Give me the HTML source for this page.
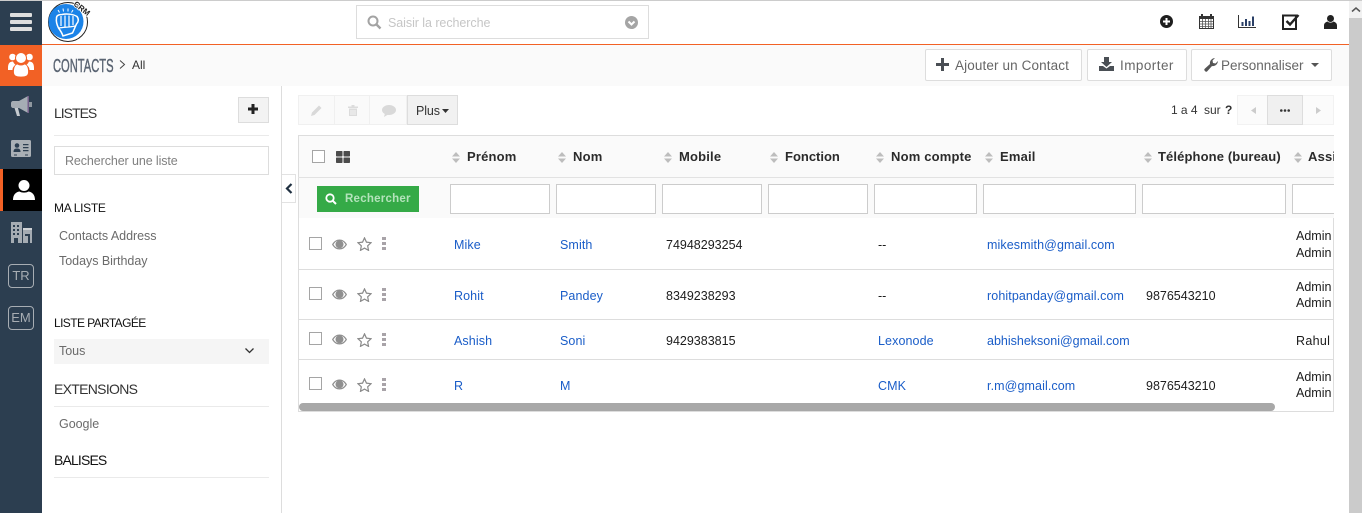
<!DOCTYPE html>
<html lang="fr"><head><meta charset="utf-8"><title>Contacts</title>
<style>
html,body{margin:0;padding:0;width:1362px;height:513px;overflow:hidden;background:#fff}
body{position:relative;font-family:"Liberation Sans","DejaVu Sans",sans-serif;font-size:12.5px;color:#333}
.b{position:absolute;box-sizing:border-box}
.t{position:absolute;white-space:nowrap;line-height:20px;height:20px;letter-spacing:.1px}
.l{color:#1a5dc8;margin-top:1px}
.g{color:#6b6b6b;letter-spacing:-.03px}
.h{font-weight:bold;font-size:13px;color:#2b2b2b;letter-spacing:.18px}
.s{font-size:14px;color:#333}
.m{font-size:12.5px;color:#1c1c1c;letter-spacing:0;margin-top:1px}
.btn{position:absolute;box-sizing:border-box;background:#fff;border:1px solid #ddd;border-radius:2px;top:49px;height:32px}
.inp{position:absolute;box-sizing:border-box;background:#fff;border:1px solid #ccc;top:184px;height:30px}
.cb{position:absolute;box-sizing:border-box;width:13px;height:13px;border:1px solid #a5a5a5;background:#fff;left:309px}
svg{position:absolute;overflow:visible}
</style></head><body>
<svg width="0" height="0" style="position:absolute"><defs>
<symbol id="sort" viewBox="0 0 8 11"><path d="M4 0L8 4.500H0zM0 6.500H8L4 11z" fill="#bdbdbd"/></symbol>
<symbol id="eye" viewBox="0 0 15 11"><path d="M0 5.500C2 2 4.600 .5 7.500 .5S13 2 15 5.500C13 9 10.400 10.500 7.500 10.500S2 9 0 5.500z" fill="#8f8f8f"/><path d="M1.500 5.500C3 3.200 4.500 2.200 5.500 1.900A4 4 0 1 0 9.500 1.900C10.500 2.200 12 3.200 13.500 5.500C12 7.900 10 9.300 7.500 9.300S3 7.900 1.500 5.500z" fill="#fff"/><circle cx="7.500" cy="5" r="3.300" fill="#8f8f8f"/></symbol>
<symbol id="star" viewBox="0 0 16 15"><path d="M8 1L10.100 5.500 15 6.100 11.400 9.500 12.300 14.300 8 11.900 3.700 14.300 4.600 9.500 1 6.100 5.900 5.500z" fill="none" stroke="#8a8a8a" stroke-width="1.300"/></symbol>
<symbol id="dots" viewBox="0 0 4 13"><path d="M0 0H4V3H0zM0 5H4V8H0zM0 10H4V13H0z" fill="#a8a3a8"/></symbol>
</defs></svg>

<!-- top -->
<div class="b" style="left:0;top:0;width:1362px;height:1px;background:#ccc"></div>
<div class="b" style="left:42px;top:44px;width:1307px;height:1px;background:#f26125"></div>
<div class="b" style="left:42px;top:45px;width:1307px;height:41px;background:#fafafa"></div>

<!-- sidebar -->
<div class="b" style="left:0;top:1px;width:42px;height:512px;background:#2c3e50"></div>
<div class="b" style="left:10px;top:13px;width:22px;height:4px;background:#dedede;border-radius:1px"></div>
<div class="b" style="left:10px;top:20px;width:22px;height:4px;background:#dedede;border-radius:1px"></div>
<div class="b" style="left:10px;top:27px;width:22px;height:4px;background:#dedede;border-radius:1px"></div>
<div class="b" style="left:0;top:45px;width:42px;height:41px;background:#f26125"></div>
<svg style="left:8px;top:51px" width="26" height="26" viewBox="0 0 26 26" fill="#fff"><circle cx="4.500" cy="6" r="3.300"/><circle cx="21.500" cy="6" r="3.300"/><path d="M0 17C0 12 2 10.500 5 10.500C6 12.500 7 13.500 8 14C5.500 15 4.500 17 4.500 19H0zM26 17C26 12 24 10.500 21 10.500C20 12.500 19 13.500 18 14C20.500 15 21.500 17 21.500 19H26z"/><circle cx="13" cy="7" r="5.500" stroke="#f26125" stroke-width="1"/><path d="M5.500 21C5.500 16 7 13.500 9.500 13C11.500 14.500 14.500 14.500 16.500 13C19 13.500 20.500 16 20.500 21C20.500 25 18 26 13 26S5.500 25 5.500 21z" stroke="#f26125" stroke-width=".8"/></svg>
<svg style="left:11px;top:96px" width="21" height="21" viewBox="0 0 21 21"><path d="M0 7C0 6 1 5 2 5H8L17 0V17L8 12H2C1 12 0 11 0 10z" fill="#a6adb4"/><path d="M3.500 12H7L9 20H6z" fill="#c5cacf"/><rect x="16.500" y="0" width="1.500" height="17" fill="#75608a"/><rect x="18" y="6" width="3" height="5" fill="#8f979f"/></svg>
<svg style="left:11px;top:140px" width="20" height="17" viewBox="0 0 20 17"><rect width="20" height="17" rx="1.500" fill="#aab0b6"/><circle cx="6" cy="5.500" r="2.300" fill="#2c3e50"/><path d="M2.500 12C2.500 9 4 8.500 6 8.500S9.500 9 9.500 12z" fill="#2c3e50"/><path d="M12 4H17.500V5.300H12zM12 7H17.500V8.300H12zM12 10H17.500V11.300H12zM3 14.500H6V15.500H3zM14 14.500H17V15.500H14z" fill="#2c3e50"/></svg>
<div class="b" style="left:0;top:169px;width:42px;height:42px;background:#000"></div>
<div class="b" style="left:0;top:169px;width:3px;height:42px;background:#f26125"></div>
<svg style="left:13px;top:179px" width="22" height="22" viewBox="0 0 22 22" fill="#fff"><circle cx="11" cy="6.500" r="5.500"/><path d="M0 21C0 15.500 3 13 6.500 12.500C9 14 13 14 15.500 12.500C19 13 22 15.500 22 21z"/></svg>
<svg style="left:11px;top:222px" width="21" height="21" viewBox="0 0 21 21"><path d="M0 0H11V21H0z" fill="#a5acb3"/><path d="M2 3H4V5H2zM6 3H8V5H6zM2 7H4V9H2zM6 7H8V9H6zM2 11H4V13H2zM6 11H8V13H6zM3 16H7V21H3z" fill="#2c3e50"/><path d="M12 7H21V21H12z" fill="#a5acb3"/><path d="M12 6H21V8H12z" fill="#d0d3d6"/><path d="M14 12H19V21H17V14H14z" fill="#2c3e50"/></svg>
<div class="b" style="left:8px;top:264px;width:26px;height:24px;border:1px solid #a7adb3;border-radius:4px"></div>
<div class="t" style="left:8px;top:266px;width:26px;text-align:center;color:#a7adb3;font-size:13px;letter-spacing:0">TR</div>
<div class="b" style="left:8px;top:306px;width:26px;height:24px;border:1px solid #a7adb3;border-radius:4px"></div>
<div class="t" style="left:8px;top:308px;width:26px;text-align:center;color:#a7adb3;font-size:13px;letter-spacing:0">EM</div>

<!-- logo -->
<svg style="left:47px;top:1px" width="43" height="42" viewBox="0 0 43 42">
<circle cx="21" cy="21" r="19.500" fill="#fff" stroke="#222" stroke-width="1"/>
<circle cx="19" cy="20.500" r="17.500" fill="#1b83e8"/>
<path d="M9.500 17C9.500 14.500 12 13.500 15 13.500C19 12.500 26 13 30 15.500C32 18 31.500 21 29.500 23C28 26 27 29 25.500 32L16 35C15 32 13 29 11.500 27C10 24 9 20 9.500 17z" fill="#1b83e8" stroke="#fff" stroke-width="1.500"/>
<path d="M14 15V25M18 14.500V26M22 14.500V26M26 15V24M12 27C17 26 22 26.500 28 25" fill="none" stroke="#fff" stroke-width="1.200"/>
<path d="M11 9L12.500 11.500M16 7.500L16.500 10.500M21 7.500V10.500M26 9L24.500 11.500" stroke="#fff" stroke-width="1"/>
<text x="0" y="0" transform="translate(26 4) rotate(38)" font-family="Liberation Sans" font-size="8" font-weight="bold" fill="#222" stroke="#fff" stroke-width="1.500" paint-order="stroke">CRM</text>
</svg>

<!-- search -->
<div class="b" style="left:356px;top:5px;width:293px;height:34px;border:1px solid #ddd;background:#fff"></div>
<svg style="left:367px;top:15px" width="15" height="15" viewBox="0 0 15 15"><circle cx="6" cy="6" r="4.500" fill="none" stroke="#a3a3a3" stroke-width="2"/><path d="M9.500 9.500L13.500 13.500" stroke="#a3a3a3" stroke-width="2.400"/></svg>
<div class="t" style="left:388px;top:13px;color:#c6c6c6;font-size:12.500px;letter-spacing:-.06px">Saisir la recherche</div>
<svg style="left:625px;top:16px" width="13" height="13" viewBox="0 0 13 13"><circle cx="6.500" cy="6.500" r="6.500" fill="#a5a5a5"/><path d="M3.500 5.500L6.500 8.500 9.500 5.500" fill="none" stroke="#fff" stroke-width="2"/></svg>

<!-- top right icons -->
<svg style="left:1160px;top:15px" width="13" height="13" viewBox="0 0 13 13"><circle cx="6.500" cy="6.500" r="6.500" fill="#1e1e1e"/><path d="M6.500 3V10M3 6.500H10" stroke="#fff" stroke-width="2"/></svg>
<svg style="left:1199px;top:14px" width="15" height="15" viewBox="0 0 15 15"><rect x=".5" y="2.500" width="14" height="12" fill="#fff" stroke="#333"/><rect x=".5" y="2" width="14" height="3" fill="#333"/><path d="M3 0V3M12 0V3" stroke="#333" stroke-width="2"/><path d="M1 7.500H14M1 10H14M1 12.500H14M3.500 5V14M6.500 5V14M9.500 5V14M12 5V14" stroke="#555" stroke-width=".8"/></svg>
<svg style="left:1238px;top:15px" width="18" height="13" viewBox="0 0 18 13"><path d="M.5 0V12.500H18" fill="none" stroke="#333"/><path d="M3.500 7H5.500V11H3.500zM7 4H9V11H7zM10.500 6H12.500V11H10.500zM14 1.500H16V11H14z" fill="#2a3f66"/></svg>
<svg style="left:1282px;top:13px" width="18" height="18" viewBox="0 0 18 18"><path d="M1 2.500H14V16H1z" fill="none" stroke="#222" stroke-width="2"/><path d="M4.500 8L8 11.500 16.500 2" fill="none" stroke="#222" stroke-width="2.400"/></svg>
<svg style="left:1324px;top:15px" width="13" height="14" viewBox="0 0 13 14" fill="#222"><circle cx="6.500" cy="3.500" r="3.500"/><path d="M0 14V10.500C0 8 2 7 3.500 6.500C5 8 8 8 9.500 6.500C11 7 13 8 13 10.500V14z"/></svg>

<!-- scrollbar -->
<div class="b" style="left:1349px;top:1px;width:13px;height:512px;background:#cbcbcb"></div>
<div class="b" style="left:1349px;top:1px;width:13px;height:17px;background:#f1f1f1"></div>
<svg style="left:1352px;top:7px" width="8" height="5" viewBox="0 0 8 5"><path d="M0 4.500L4 1 8 4.500" fill="none" stroke="#555" stroke-width="1.500"/></svg>

<!-- header -->
<div class="t" style="left:53px;top:56px;font-size:18px;color:#5a6472;transform:scaleX(.62);transform-origin:0 50%;letter-spacing:0;-webkit-text-stroke:.45px #5a6472">CONTACTS</div>
<svg style="left:119px;top:60px" width="7" height="9" viewBox="0 0 7 9"><path d="M1 .5L5.500 4.500 1 8.500" fill="none" stroke="#444" stroke-width="1"/></svg>
<div class="t" style="left:132px;top:55px;font-size:12px;color:#333;letter-spacing:0">All</div>

<div class="btn" style="left:925px;width:157px"></div>
<svg style="left:936px;top:58px" width="13" height="13" viewBox="0 0 13 13"><path d="M5 0H8V5H13V8H8V13H5V8H0V5H5z" fill="#4a4f55"/></svg>
<div class="t" style="left:955px;top:56px;font-size:13.500px;color:#666;letter-spacing:.12px">Ajouter un Contact</div>
<div class="btn" style="left:1087px;width:100px"></div>
<svg style="left:1099px;top:57px" width="15" height="14" viewBox="0 0 15 14" fill="#4a4f55"><path d="M5 0H10V5H13L7.500 10 2 5H5z"/><path d="M0 9H4L7.500 11.500 11 9H15V14H0z"/></svg>
<div class="t" style="left:1120px;top:56px;font-size:13.500px;color:#666;letter-spacing:.45px">Importer</div>
<div class="btn" style="left:1191px;width:141px"></div>
<svg style="left:1204px;top:58px" width="14" height="14" viewBox="0 0 14 14"><path d="M1 13C0 12 0 11.500 1 10.500L6 6C5.500 3.500 7 .5 11 0L8.500 2.500 9 5 11.500 5.500 14 3C13.500 7 10.500 8.500 8 8L3.500 13C2.500 14 2 14 1 13z" fill="#555"/></svg>
<div class="t" style="left:1221px;top:56px;font-size:13.500px;color:#666;letter-spacing:0">Personnaliser</div>
<svg style="left:1311px;top:63px" width="8" height="4" viewBox="0 0 8 4"><path d="M0 0H8L4 4z" fill="#555"/></svg>

<!-- left panel -->
<div class="b" style="left:281px;top:86px;width:1px;height:427px;background:#ddd"></div>
<div class="t s" style="left:54px;top:103px;letter-spacing:-1px">LISTES</div>
<div class="b" style="left:238px;top:97px;width:31px;height:26px;background:#f3f3f3;border:1px solid #ddd"></div>
<svg style="left:248px;top:104px" width="10" height="10" viewBox="0 0 10 10"><path d="M3.500 0H6.500V3.500H10V6.500H6.500V10H3.500V6.500H0V3.500H3.500z" fill="#222"/></svg>
<div class="b" style="left:54px;top:135px;width:215px;height:1px;background:#eaeaea"></div>
<div class="b" style="left:54px;top:146px;width:215px;height:29px;border:1px solid #ddd"></div>
<div class="t g" style="left:65px;top:151px;font-size:12.500px;color:#808080;letter-spacing:-.1px">Rechercher une liste</div>
<div class="t" style="left:54px;top:198px;font-size:12px;color:#111;letter-spacing:-.3px">MA LISTE</div>
<div class="t g" style="left:59px;top:226px">Contacts Address</div>
<div class="t g" style="left:59px;top:251px">Todays Birthday</div>
<div class="t" style="left:54px;top:313px;font-size:12px;color:#111;letter-spacing:-.6px">LISTE PARTAGÉE</div>
<div class="b" style="left:54px;top:339px;width:215px;height:25px;background:#f5f5f5"></div>
<div class="t g" style="left:59px;top:341px">Tous</div>
<svg style="left:245px;top:348px" width="9" height="6" viewBox="0 0 9 6"><path d="M.5 .5L4.500 4.500 8.500 .5" fill="none" stroke="#333" stroke-width="1.300"/></svg>
<div class="t s" style="left:54px;top:379px;letter-spacing:-.7px">EXTENSIONS</div>
<div class="b" style="left:54px;top:406px;width:215px;height:1px;background:#eaeaea"></div>
<div class="t g" style="left:59px;top:414px">Google</div>
<div class="t s" style="left:54px;top:450px;color:#111;letter-spacing:-.85px">BALISES</div>
<div class="b" style="left:54px;top:477px;width:215px;height:1px;background:#eaeaea"></div>

<div class="b" style="left:282px;top:174px;width:14px;height:29px;background:#fff;border:1px solid #e2e2e2;border-left:0"></div>
<svg style="left:285px;top:183px" width="8" height="11" viewBox="0 0 8 11"><path d="M6.500 1L2 5.500 6.500 10" fill="none" stroke="#1f2f40" stroke-width="2.200"/></svg>

<!-- toolbar -->
<div class="b" style="left:298px;top:95px;width:109px;height:30px;background:#fafafa;border:1px solid #f0f0f0"></div>
<div class="b" style="left:334px;top:95px;width:1px;height:30px;background:#f0f0f0"></div>
<div class="b" style="left:369px;top:95px;width:1px;height:30px;background:#f0f0f0"></div>
<svg style="left:311px;top:105px" width="11" height="11" viewBox="0 0 11 11"><path d="M0 11L1 7.500 8 .5 10.500 3 3.500 10z" fill="#d9d9d9"/></svg>
<svg style="left:348px;top:105px" width="10" height="11" viewBox="0 0 10 11"><path d="M0 1.500H3.500V0H6.500V1.500H10V3H0zM1 3.500H9V11H1z" fill="#dcdcdc"/><path d="M3 5V10M5 5V10M7 5V10" stroke="#fafafa" stroke-width=".8"/></svg>
<svg style="left:382px;top:105px" width="14" height="12" viewBox="0 0 14 12"><ellipse cx="7" cy="5" rx="7" ry="5" fill="#d9d9d9"/><path d="M3 8L2 12 7 9z" fill="#d9d9d9"/></svg>
<div class="b" style="left:407px;top:95px;width:51px;height:30px;background:#f1f1f1;border:1px solid #ddd"></div>
<div class="t" style="left:416px;top:101px;font-size:12.500px;color:#333;letter-spacing:-.1px">Plus</div>
<svg style="left:442px;top:109px" width="7" height="4" viewBox="0 0 7 4"><path d="M0 0H7L3.500 4z" fill="#333"/></svg>

<div class="t" style="left:1171px;top:100px;font-size:12px;letter-spacing:-.05px;color:#333">1 a 4&nbsp;&nbsp;sur</div>
<div class="t" style="left:1225px;top:100px;font-size:12px;font-weight:bold;color:#333;letter-spacing:0">?</div>
<div class="b" style="left:1237px;top:95px;width:97px;height:30px;background:#fbfbfb;border:1px solid #f2f2f2"></div>
<div class="b" style="left:1267px;top:95px;width:36px;height:30px;background:#f0f0f0;border:1px solid #ddd"></div>
<svg style="left:1251px;top:107px" width="5" height="7" viewBox="0 0 5 7"><path d="M5 0V7L0 3.500z" fill="#ccc"/></svg>
<svg style="left:1280px;top:109px" width="10" height="3" viewBox="0 0 10 3" fill="#333"><circle cx="1.300" cy="1.500" r="1.300"/><circle cx="5" cy="1.500" r="1.300"/><circle cx="8.700" cy="1.500" r="1.300"/></svg>
<svg style="left:1316px;top:107px" width="5" height="7" viewBox="0 0 5 7"><path d="M0 0V7L5 3.500z" fill="#ccc"/></svg>

<!-- table -->
<div class="b" style="left:298px;top:135px;width:1036px;height:83px;background:#fafafa;border-top:1px solid #ddd;border-left:1px solid #ddd"></div>
<div class="b" style="left:298px;top:177px;width:1036px;height:1px;background:#e2e2e2"></div>
<div class="b" style="left:298px;top:218px;width:1px;height:194px;background:#ddd"></div>
<div class="b" style="left:1333px;top:218px;width:1px;height:194px;background:#ddd"></div>
<div class="b" style="left:298px;top:269px;width:1036px;height:1px;background:#ddd"></div>
<div class="b" style="left:298px;top:319px;width:1036px;height:1px;background:#ddd"></div>
<div class="b" style="left:298px;top:359px;width:1036px;height:1px;background:#ddd"></div>
<div class="b" style="left:298px;top:411px;width:1036px;height:1px;background:#ddd"></div>
<div class="b" style="left:299px;top:403px;width:976px;height:8px;background:#a8a8a8;border-radius:4px"></div>

<div class="b" style="left:312px;top:150px;width:13px;height:13px;border:1px solid #a5a5a5;background:#fff"></div>
<svg style="left:336px;top:151px" width="14" height="12" viewBox="0 0 14 12" fill="#4c4c4c"><rect width="6.500" height="5.500" rx=".7"/><rect x="7.500" width="6.500" height="5.500" rx=".7"/><rect y="6.500" width="6.500" height="5.500" rx=".7"/><rect x="7.500" y="6.500" width="6.500" height="5.500" rx=".7"/></svg>

<svg style="left:452px;top:152px" width="8" height="11"><use href="#sort"/></svg><div class="t h" style="left:467px;top:147px">Prénom</div>
<svg style="left:558px;top:152px" width="8" height="11"><use href="#sort"/></svg><div class="t h" style="left:573px;top:147px">Nom</div>
<svg style="left:664px;top:152px" width="8" height="11"><use href="#sort"/></svg><div class="t h" style="left:679px;top:147px">Mobile</div>
<svg style="left:770px;top:152px" width="8" height="11"><use href="#sort"/></svg><div class="t h" style="left:785px;top:147px;letter-spacing:0">Fonction</div>
<svg style="left:876px;top:152px" width="8" height="11"><use href="#sort"/></svg><div class="t h" style="left:891px;top:147px">Nom compte</div>
<svg style="left:985px;top:152px" width="8" height="11"><use href="#sort"/></svg><div class="t h" style="left:1000px;top:147px">Email</div>
<svg style="left:1144px;top:152px" width="8" height="11"><use href="#sort"/></svg><div class="t h" style="left:1158px;top:147px;letter-spacing:.12px">Téléphone (bureau)</div>
<svg style="left:1294px;top:152px" width="8" height="11"><use href="#sort"/></svg><div class="t h" style="left:1308px;top:147px;width:26px;overflow:hidden">Assigné</div>

<div class="b" style="left:317px;top:186px;width:102px;height:26px;background:#35aa47"></div>
<svg style="left:325px;top:193px" width="12" height="12" viewBox="0 0 12 12"><circle cx="5" cy="5" r="3.700" fill="none" stroke="#fff" stroke-width="1.800"/><path d="M7.800 7.800L11 11" stroke="#fff" stroke-width="2"/></svg>
<div class="t" style="left:345px;top:189px;font-weight:bold;font-size:11.500px;color:#b4e3bb;letter-spacing:.25px">Rechercher</div>

<div class="inp" style="left:450px;width:100px"></div>
<div class="inp" style="left:556px;width:100px"></div>
<div class="inp" style="left:662px;width:100px"></div>
<div class="inp" style="left:768px;width:100px"></div>
<div class="inp" style="left:874px;width:103px"></div>
<div class="inp" style="left:983px;width:153px"></div>
<div class="inp" style="left:1142px;width:144px"></div>
<div class="b" style="left:1292px;top:184px;width:42px;height:30px;background:#fff;border:1px solid #ccc;border-right:0"></div>

<!-- row icons -->
<div class="cb" style="top:237px"></div>
<svg style="left:332px;top:239px" width="15" height="11"><use href="#eye"/></svg>
<svg style="left:357px;top:237px" width="15" height="14"><use href="#star"/></svg>
<svg style="left:382px;top:237px" width="4" height="13"><use href="#dots"/></svg>
<div class="cb" style="top:287px"></div>
<svg style="left:332px;top:289px" width="15" height="11"><use href="#eye"/></svg>
<svg style="left:357px;top:288px" width="15" height="14"><use href="#star"/></svg>
<svg style="left:382px;top:288px" width="4" height="13"><use href="#dots"/></svg>
<div class="cb" style="top:332px"></div>
<svg style="left:332px;top:334px" width="15" height="11"><use href="#eye"/></svg>
<svg style="left:357px;top:333px" width="15" height="14"><use href="#star"/></svg>
<svg style="left:382px;top:333px" width="4" height="13"><use href="#dots"/></svg>
<div class="cb" style="top:377px"></div>
<svg style="left:332px;top:379px" width="15" height="11"><use href="#eye"/></svg>
<svg style="left:357px;top:378px" width="15" height="14"><use href="#star"/></svg>
<svg style="left:382px;top:378px" width="4" height="13"><use href="#dots"/></svg>

<!-- rows -->
<div class="t l" style="left:454px;top:234px">Mike</div>
<div class="t l" style="left:560px;top:234px">Smith</div>
<div class="t m" style="left:666px;top:234px">74948293254</div>
<div class="t m" style="left:878px;top:234px">--</div>
<div class="t l" style="left:987px;top:234px">mikesmith@gmail.com</div>
<div class="t m" style="left:1296px;top:225px">Admin</div>
<div class="t m" style="left:1296px;top:242px">Admin</div>

<div class="t l" style="left:454px;top:285px">Rohit</div>
<div class="t l" style="left:560px;top:285px">Pandey</div>
<div class="t m" style="left:666px;top:285px">8349238293</div>
<div class="t m" style="left:878px;top:285px">--</div>
<div class="t l" style="left:987px;top:285px">rohitpanday@gmail.com</div>
<div class="t m" style="left:1146px;top:285px">9876543210</div>
<div class="t m" style="left:1296px;top:276px">Admin</div>
<div class="t m" style="left:1296px;top:292px">Admin</div>

<div class="t l" style="left:454px;top:330px">Ashish</div>
<div class="t l" style="left:560px;top:330px">Soni</div>
<div class="t m" style="left:666px;top:330px">9429383815</div>
<div class="t l" style="left:878px;top:330px">Lexonode</div>
<div class="t l" style="left:987px;top:330px;letter-spacing:0">abhisheksoni@gmail.com</div>
<div class="t m" style="left:1296px;top:330px;width:37px;overflow:hidden;letter-spacing:.3px">Rahul Kumar</div>

<div class="t l" style="left:454px;top:375px">R</div>
<div class="t l" style="left:560px;top:375px">M</div>
<div class="t l" style="left:878px;top:375px">CMK</div>
<div class="t l" style="left:987px;top:375px">r.m@gmail.com</div>
<div class="t m" style="left:1146px;top:375px">9876543210</div>
<div class="t m" style="left:1296px;top:366px">Admin</div>
<div class="t m" style="left:1296px;top:382px">Admin</div>
</body></html>
